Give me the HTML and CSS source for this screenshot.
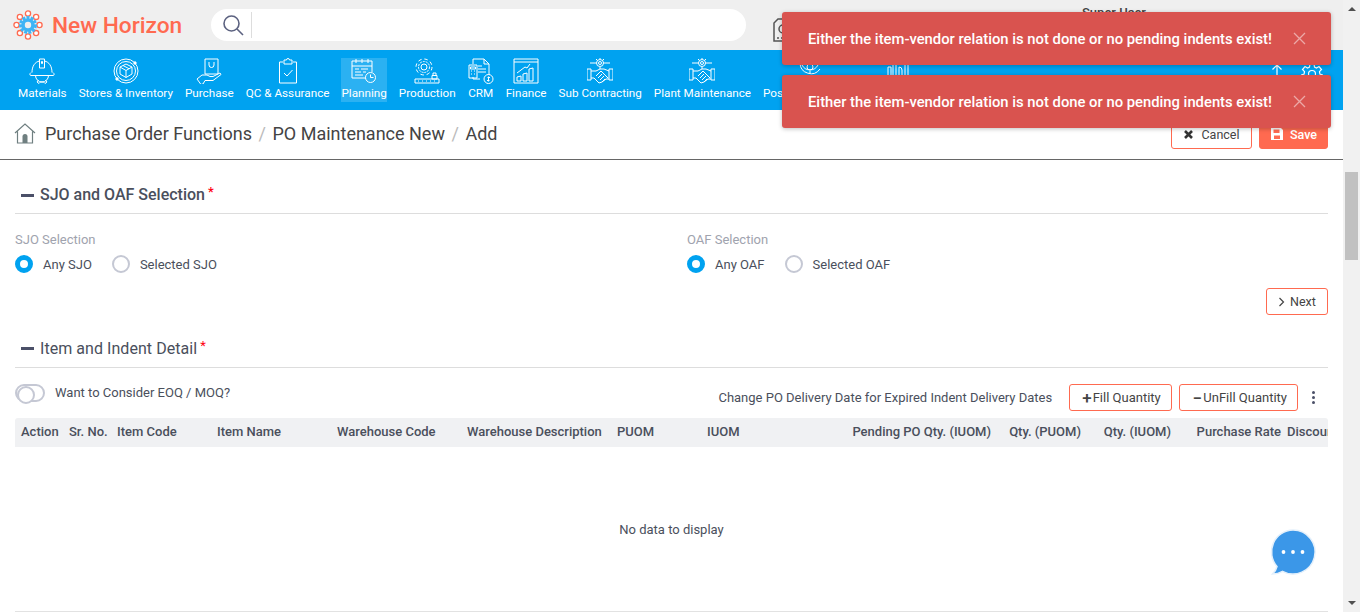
FILE: index.html
```html
<!DOCTYPE html>
<html lang="en">
<head>
  <meta charset="UTF-8">
  <title>PO Maintenance New</title>
  <link rel="stylesheet" href="styles.css">
</head>
<body>
  <svg class="defs" width="0" height="0">
    <symbol id="shake" viewBox="0 0 26 26">
      <circle cx="13" cy="5" r="3.500"/><circle cx="13" cy="5" r="1.500"/>
      <path d="M9.500 5H3M16.500 5H23M13 1V0M13 9v2M9 1l1.500 1.500M17 1l-1.500 1.500"/>
      <path d="M0 11h4v11H0zM26 11h-4v11h4zM4 13h5l4-2h4l5 2M4 20h3l5 5 3-1 4-3h3"/>
      <path d="M9 18l5-5 7 7M11 20l4-4M13 22l4-4M15 24l3-3"/>
    </symbol>
  </svg>

  <div class="app">
    <div class="page">
      <header class="topbar">
        <div class="logo">
          <svg width="32" height="32" viewBox="0 0 32 32" fill="none">
            <g stroke="#ff6a50" stroke-width="1.300" fill="#fff">
              <circle cx="16" cy="4.500" r="2.600"/><circle cx="24.100" cy="7.900" r="2.600"/><circle cx="27.500" cy="16" r="2.600"/><circle cx="24.100" cy="24.100" r="2.600"/>
              <circle cx="16" cy="27.500" r="2.600"/><circle cx="7.900" cy="24.100" r="2.600"/><circle cx="4.500" cy="16" r="2.600"/><circle cx="7.900" cy="7.900" r="2.600"/>
            </g>
            <circle cx="16" cy="16" r="7.500" fill="none" stroke="#3fb4f5" stroke-width="3" stroke-dasharray="3 1.200"/>
            <circle cx="16" cy="16" r="5" fill="none" stroke="#3fb4f5" stroke-width="3.600"/>
          </svg>
          <span>New Horizon</span>
        </div>
        <div class="search">
          <svg width="24" height="24" viewBox="0 0 24 24" fill="none" stroke="#5c6280" stroke-width="1.600"><circle cx="10.500" cy="10.500" r="7.500"/><path d="M16 16l6 6"/></svg>
          <span class="search-line"></span>
        </div>
        <svg class="doc-icon" width="18" height="24" viewBox="0 0 18 24" fill="none" stroke="#555" stroke-width="1.500"><path d="M5 1h12v22H1V5z"/><circle cx="10" cy="11" r="4"/><path d="M4 20h2M8 20h2"/></svg>
        <div class="user">Super User</div>
      </header>

      <nav class="mainnav">
        <a class="nav-item">
          <svg viewBox="0 0 26 26"><path d="M3 14.500C3 8 6 4 10.500 3M23 14.500C23 8 20 4 15.500 3M2 14.500c-1.500 1-1.500 3 0 3h22c1.500 0 1.500-2 0-3M10.500 1h5v9h-5zM12.500 3.500h1v2h-1zM6.500 17.500a6.500 6.500 0 0 0 13 0M9.500 22l-1.500 2 2 1.500 1.500-1.500h3l1.500 1.500 2-1.500-1.500-2"/></svg>
          <span>Materials</span>
        </a>
        <a class="nav-item">
          <svg viewBox="0 0 26 26"><circle cx="13" cy="13" r="12"/><circle cx="13" cy="13" r="9.500"/><path d="M13 6l6 3v7l-6 3.500-6-3.500V9zM7 9l6 3.500L19 9M13 12.500v7M10 7.500l6 3.200"/><circle cx="22" cy="5" r="1.200" fill="#fff"/><circle cx="4" cy="21" r="1.200" fill="#fff"/></svg>
          <span>Stores &amp; Inventory</span>
        </a>
        <a class="nav-item">
          <svg viewBox="0 0 26 26"><path d="M9 1h13v15H9zM13 4v3a2.500 2.500 0 0 0 5 0V4M1 21l5-4h5l3 1.500h3l7-3.500 1 1.500-8 6H9l-2 3.500-2 .5z"/></svg>
          <span>Purchase</span>
        </a>
        <a class="nav-item">
          <svg viewBox="0 0 26 26"><path d="M8 4H4.500v21h17V4H18M9 2h2.500a1.500 1.500 0 0 1 3 0H17v4H9zM9 15l3 3 5.500-6"/></svg>
          <span>QC &amp; Assurance</span>
        </a>
        <a class="nav-item active">
          <svg viewBox="0 0 26 26"><path d="M15 20H1V3h20v11M1 8h20M5 1v4M11 1v4M17 1v4M4 11h4M10 11h7M4 14h6M12 14h3M4 17h8"/><circle cx="19.500" cy="19.500" r="5"/><path d="M19.500 16.500v3h3"/></svg>
          <span>Planning</span>
        </a>
        <a class="nav-item">
          <svg viewBox="0 0 26 26"><circle cx="10" cy="9" r="3"/><circle cx="10" cy="9" r="5.500" stroke-dasharray="2 1"/><circle cx="10" cy="9" r="8" stroke-dasharray="3.500 2.800"/><path d="M1 21h24v4H1zM18 17.500h5V21h-5zM19 17.500V15h3v2.500M4 23h1M8 23h1M12 23h1M16 23h1M20 23h1"/></svg>
          <span>Production</span>
        </a>
        <a class="nav-item">
          <svg viewBox="0 0 26 26"><path d="M5 6V1h11l5 5v11M16 1v5h5M12 21H5v-2M10 11h8M10 14h8M10 8h4"/><path d="M1 7h8v13H1zM2.500 9h5v2h-5zM3 13h1M6 13h1M3 16h1M6 16h1"/><circle cx="20.500" cy="21" r="4.500"/><path d="M20.500 18.500v5M19 22.500h2.500M22 19.500h-2.500"/></svg>
          <span>CRM</span>
        </a>
        <a class="nav-item">
          <svg viewBox="0 0 26 26"><path d="M1 1h24v24H1zM1 4h24M4 23v-4l4-1v5zM10 23v-7l4-1v8zM16 23V11l4-1v13zM4 15l8-6 2 1 3-4"/></svg>
          <span>Finance</span>
        </a>
        <a class="nav-item"><svg><use href="#shake"/></svg><span>Sub Contracting</span></a>
        <a class="nav-item"><svg><use href="#shake"/></svg><span>Plant Maintenance</span></a>
        <a class="nav-item post">
          <svg viewBox="0 0 26 26"><circle cx="13" cy="9" r="3"/><path d="M5 7a9 9 0 0 0 16 0M3 5a11 11 0 0 0 20 6M13 5V3M13 13v2"/></svg>
          <span>Post Production</span>
        </a>
        <a class="nav-item reports">
          <svg viewBox="0 0 26 26"><path d="M3 18V9h3v9M8 18V6h3v12M14 18V9a3 3 0 0 1 3 3v6M20 18V7M23 18V7"/></svg>
          <span>Reports</span>
        </a>
        <div class="nav-right">
          <svg class="nav-arrow" width="12" height="16" viewBox="0 0 12 16"><path d="M6 15V2M1.500 6.500L6 2l4.500 4.500"/></svg>
          <svg class="nav-gear" width="22" height="22" viewBox="0 0 22 22"><circle cx="11" cy="11" r="3.500"/><path d="M9 1h4l.5 3 2 1 2.500-1.500 2.500 3-2 2.200.4 2.300 2.600 1-1 3.500-2.800-.3-1.400 1.800.9 2.800-3.600 1.200-1.400-2.600h-2.400L8.400 21l-3.600-1.200.9-2.800-1.400-1.800-2.800.3-1-3.500 2.600-1 .4-2.300-2-2.200 2.500-3L6.500 5l2-1z"/></svg>
        </div>
      </nav>

      <div class="crumbbar">
        <svg class="home" width="22" height="22" viewBox="0 0 22 22" fill="none"><path d="M1 11L11 2l10 9M3.500 9.500V21h15V9.500" stroke="#6f7f80" stroke-width="1.200"/><path d="M8.500 21v-6.500a2.500 2.500 0 0 1 5 0V21z" fill="#6f7f80"/></svg>
        <span class="crumb">Purchase Order Functions</span>
        <span class="crumb-sep">/</span>
        <span class="crumb">PO Maintenance New</span>
        <span class="crumb-sep">/</span>
        <span class="crumb">Add</span>
        <div class="crumb-actions">
          <button class="btn">
            <svg width="11" height="11" viewBox="0 0 11 11"><path d="M2 2l7 7M9 2L2 9" stroke="#333" stroke-width="2.600"/></svg>
            Cancel
          </button>
          <button class="btn btn-save">
            <svg width="14" height="14" viewBox="0 0 14 14"><path fill="#fff" fill-rule="evenodd" d="M1 1h10l2 2v10H1zM3.500 2.500V6h6V2.500zM4 8.500V12h6V8.500z"/></svg>
            Save
          </button>
        </div>
      </div>

      <main class="content">
        <section class="sect">
          <h3 class="sect-title"><i class="dash"></i>SJO and OAF Selection<em>*</em></h3>
          <div class="sel-row">
            <div class="sel-col">
              <label class="sel-label">SJO Selection</label>
              <div class="radios">
                <span class="radio on"></span><span class="radio-text">Any SJO</span>
                <span class="radio"></span><span class="radio-text">Selected SJO</span>
              </div>
            </div>
            <div class="sel-col">
              <label class="sel-label">OAF Selection</label>
              <div class="radios">
                <span class="radio on"></span><span class="radio-text">Any OAF</span>
                <span class="radio"></span><span class="radio-text">Selected OAF</span>
              </div>
            </div>
          </div>
          <div class="next-row">
            <button class="btn btn-next">
              <svg width="7" height="10" viewBox="0 0 7 10" fill="none"><path d="M1.500 1l4 4-4 4" stroke="#444" stroke-width="1.200"/></svg>
              Next
            </button>
          </div>
        </section>

        <section class="sect">
          <h3 class="sect-title light"><i class="dash"></i>Item and Indent Detail<em>*</em></h3>
          <div class="tools">
            <span class="toggle"></span>
            <span class="toggle-text">Want to Consider EOQ / MOQ?</span>
            <div class="tools-right">
              <span class="tools-text">Change PO Delivery Date for Expired Indent Delivery Dates</span>
              <button class="btn btn-qty"><b>+</b>Fill Quantity</button>
              <button class="btn btn-qty"><b>&minus;</b>UnFill Quantity</button>
              <span class="kebab"><i></i><i></i><i></i></span>
            </div>
          </div>
          <div class="grid-head">
            <span>Action</span><span>Sr. No.</span><span>Item Code</span><span>Item Name</span>
            <span>Warehouse Code</span><span>Warehouse Description</span><span>PUOM</span><span>IUOM</span>
            <span class="num">Pending PO Qty. (IUOM)</span><span class="num">Qty. (PUOM)</span><span class="num">Qty. (IUOM)</span>
            <span class="num rate">Purchase Rate</span><span class="clip">Discount</span>
          </div>
          <div class="grid-body">No data to display</div>
        </section>
      </main>
    </div>

    <div class="scrollbar">
      <span class="arrow-up"></span>
      <span class="thumb"></span>
      <span class="arrow-down"></span>
    </div>
  </div>

  <div class="toasts">
    <div class="toast"><span>Either the item-vendor relation is not done or no pending indents exist!</span><svg width="13" height="13" viewBox="0 0 13 13"><path d="M1 1l11 11M12 1L1 12"/></svg></div>
    <div class="toast"><span>Either the item-vendor relation is not done or no pending indents exist!</span><svg width="13" height="13" viewBox="0 0 13 13"><path d="M1 1l11 11M12 1L1 12"/></svg></div>
  </div>

  <div class="chat">
    <svg width="50" height="52" viewBox="0 0 50 52">
      <path d="M25 3a22 22 0 1 1-10.500 41.300c-3 1.800-6 2.700-10 2.700 2.500-2.500 4-5 4.500-7.500A22 22 0 0 1 25 3z" fill="#3b97e8" stroke="#e4f0fb" stroke-width="1.500"/>
      <circle cx="15.500" cy="25" r="1.900" fill="#fff"/><circle cx="25" cy="25" r="1.900" fill="#fff"/><circle cx="34.500" cy="25" r="1.900" fill="#fff"/>
    </svg>
  </div>
</body>
</html>
```

FILE: styles.css
```css
* { box-sizing: border-box; }
html, body { margin: 0; height: 612px; overflow: hidden; }
body { font-family: Roboto, sans-serif; color: #4a4f5c; background: #fff; }
.defs { position: absolute; }
.app { display: flex; height: 612px; }
.page { flex: 1; min-width: 0; overflow: hidden; }

/* top bar */
.topbar { height: 50px; background: #efefef; display: flex; align-items: center; padding-left: 12px; position: relative; }
.logo { display: flex; align-items: center; gap: 8px; width: 199px; font-size: 22.700px; font-weight: 500; color: #ff6a50; }
.logo svg { flex: none; }
.search { width: 535px; height: 32px; background: #fff; border-radius: 16px; display: flex; align-items: center; padding-left: 10px; }
.search-line { width: 1px; height: 26px; background: #ddd; margin-left: 6px; }
.doc-icon { margin-left: 27px; margin-top: 10px; }
.user { font-size: 13px; font-weight: 500; color: #444; margin-left: 291px; align-self: flex-start; margin-top: 5px; }

/* main menu */
.mainnav { height: 60px; background: #00a2f0; display: flex; gap: 12px; padding: 8px 0 0 18px; color: #fff; }
.nav-item { height: 44px; display: flex; flex-direction: column; align-items: center; font-size: 11.700px; white-space: nowrap; position: relative; }
.nav-item svg { width: 26px; height: 26px; fill: none; stroke: #fff; stroke-width: 1; flex: none; }
.nav-item span { margin-top: 1px; line-height: 16px; }
.nav-item.active { background: rgba(255, 255, 255, .17); }
.nav-item.post { width: 94px; align-items: flex-start; }
.nav-item.post svg { margin-left: 34px; }
.nav-item.reports { width: 58px; }
.nav-right { margin-left: auto; display: flex; align-items: flex-start; gap: 18px; padding: 5px 20px 0 0; }
.nav-right svg { fill: none; stroke: #fff; stroke-width: 1.200; }

/* breadcrumb */
.crumbbar { height: 50px; border-bottom: 1px solid #666; display: flex; align-items: center; padding: 0 15px 3px 15px; font-size: 18px; color: #444; }
.home { margin-right: 9px; margin-left: -1px; }
.crumb-sep { color: #bbb; margin: 0 6.500px; }
.crumb-actions { margin-left: auto; display: flex; gap: 7px; margin-top: 4px; }
.btn { height: 27px; font: 12.500px Roboto, sans-serif; color: #444; background: #fff; border: 1px solid #ff6a50; border-radius: 3px; display: inline-flex; align-items: center; justify-content: center; padding: 0; }
.crumb-actions .btn { width: 81px; gap: 7px; padding-bottom: 2px; }
.crumb-actions .btn-save { width: 69px; background: #ff6a50; color: #fff; font-weight: 500; gap: 6px; }

/* sections */
.content { padding: 0 15px; }
.sect-title { margin: 0; height: 54px; padding: 16px 0 0 6px; display: flex; align-items: center; font-size: 16px; font-weight: 500; color: #4a4f5c; border-bottom: 1px solid #ddd; }
.sect-title.light { height: 53px; padding-top: 14px; font-weight: 400; letter-spacing: .05px; }
.sect-title em { color: #f01; font-style: normal; font-size: 13px; margin: -6px 0 0 3px; }
.dash { width: 13px; height: 3px; background: #4b5068; margin: 1px 6px 0 0; }
.sel-row { display: flex; padding-top: 18px; }
.sel-col { width: 672px; flex: none; }
.sel-label { display: block; font-size: 13px; line-height: 15px; color: #a0a3ae; }
.radios { display: flex; align-items: center; font-size: 13px; height: 18px; margin-top: 8px; }
.radio { width: 18px; height: 18px; border-radius: 50%; border: 2px solid #c5c8d4; }
.radio.on { border: 5px solid #00a2f0; }
.radio-text { margin: 0 20px 0 10px; }
.next-row { display: flex; justify-content: flex-end; margin-top: 15px; height: 27px; }
.btn-next { width: 62px; gap: 5px; }

.tools { height: 50px; display: flex; align-items: center; font-size: 13px; position: relative; }
.toggle { width: 30px; height: 18px; border: 2px solid #c5c8d4; border-radius: 9px; position: relative; margin-bottom: 1px; }
.toggle::before { content: ""; position: absolute; left: 0; top: 0; width: 14px; height: 14px; border: 2px solid #c5c8d4; border-radius: 50%; background: #fff; }
.toggle-text { margin: 0 0 1px 10px; }
.tools-right { margin-left: auto; display: flex; align-items: center; margin-top: 9px; }
.tools-text { margin-right: 17px; }
.btn-qty { font-size: 13px; padding: 0 10px 0 12px; margin-right: 7px; height: 27px; }
.btn-qty + .btn-qty { margin-right: 0; padding-left: 13px; }
.btn-qty b { font-size: 17px; font-weight: 500; line-height: 14px; margin-right: 1px; }
.kebab { display: flex; flex-direction: column; gap: 2px; margin: 0 13px 0 14px; }
.kebab i { width: 3px; height: 3px; border-radius: 50%; background: #4b5068; }

.grid-head { height: 29px; padding-bottom: 2px; background: #f0f1f3; border-radius: 3px 3px 0 0; display: grid; grid-template-columns: 48px 48px 100px 120px 130px 150px 90px 90px 206px 90px 90px 104px 47px; align-items: center; font-size: 13px; font-weight: 500; white-space: nowrap; overflow: hidden; }
.grid-head span { padding: 0 6px; overflow: hidden; }
.grid-head .num { text-align: right; }
.grid-head .rate { padding-right: 0; overflow: visible; }
.grid-head .clip { padding-right: 0; text-overflow: clip; }
.grid-body { height: 165px; border-bottom: 1px solid #e2e2e2; display: flex; align-items: center; justify-content: center; font-size: 13px; }

/* fake scrollbar */
.scrollbar { width: 17px; background: #f1f1f1; position: relative; display: flex; flex-direction: column; align-items: center; }
.arrow-up, .arrow-down { width: 0; height: 0; border-left: 4px solid transparent; border-right: 4px solid transparent; }
.arrow-up { border-bottom: 4px solid #505050; margin-top: 7px; }
.thumb { width: 13px; height: 88px; background: #c1c1c1; margin-top: 161px; }
.arrow-down { border-top: 4px solid #505050; margin-top: auto; margin-bottom: 7px; }

/* overlays */
.toasts { position: absolute; left: 782px; top: 12px; width: 549px; display: flex; flex-direction: column; gap: 10px; }
.toast { height: 53px; background: #d9534f; border-radius: 3px; box-shadow: 0 1px 4px rgba(0, 0, 0, .25); display: flex; align-items: center; padding: 0 26px; color: #fff; font-size: 14.800px; font-weight: 500; }
.toast span { flex: 1; white-space: nowrap; }
.toast svg { stroke: rgba(255, 255, 255, .5); stroke-width: 1.300; fill: none; margin-right: -1px; }
.chat { position: absolute; left: 1268px; top: 527px; }
```
